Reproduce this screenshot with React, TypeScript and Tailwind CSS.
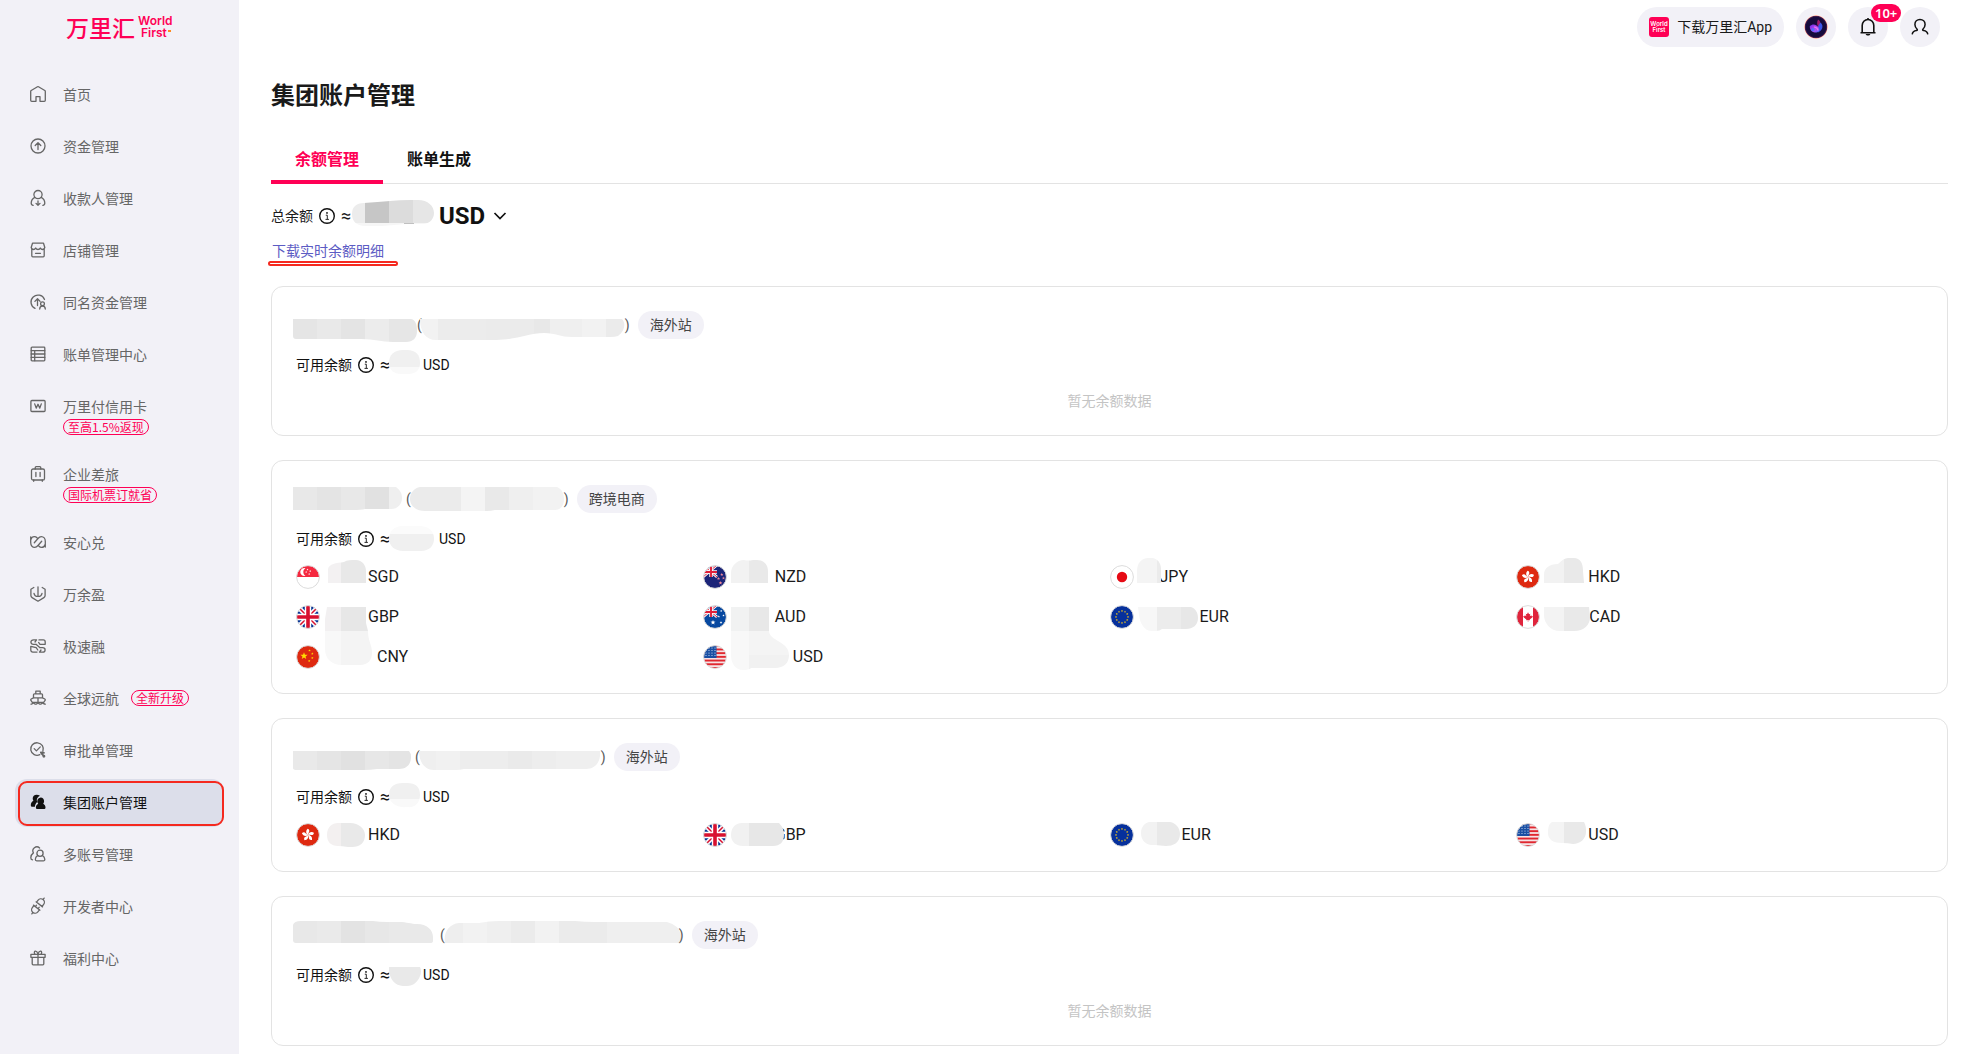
import React, { useId } from "react";

type Band = [x: number, y: number, w: number, h: number, fill: string];
type MaskSpec = { w: number; shape: string; bands: Band[] };

/* Frosted mosaic that hides a private value */
function Mask({ spec, height }: { spec: MaskSpec; height: number }) {
  const id = useId();
  return (
    <svg width={spec.w} height={height} className="shrink-0 overflow-visible" aria-hidden="true">
      <clipPath id={id}>
        <path d={spec.shape} />
      </clipPath>
      <g clipPath={`url(#${id})`} shapeRendering="crispEdges">
        {spec.bands.map(([x, y, w, h, fill], i) => (
          <rect key={i} x={x} y={y} width={w} height={h} fill={fill} />
        ))}
      </g>
    </svg>
  );
}

/* ---------- Sidebar icons ---------- */

function Glyph({ children, solid }: { children: React.ReactNode; solid?: boolean }) {
  return (
    <svg
      width="16"
      height="16"
      viewBox="0 0 16 16"
      className="shrink-0 overflow-visible"
      fill={solid ? "currentColor" : "none"}
      stroke={solid ? "none" : "currentColor"}
      strokeWidth="1.3"
      strokeLinejoin="round"
      strokeLinecap="round"
      aria-hidden="true"
    >
      {children}
    </svg>
  );
}

const icons = {
  home: (
    <Glyph>
      <path d="M6 15.3H1.7a1 1 0 0 1-1-1V5.4c0-.4.2-.7.5-.9L7.5.8a1 1 0 0 1 1 0l6.3 3.7c.3.2.5.5.5.9v8.900a1 1 0 0 1-1 1H10v-4.600H6z" />
    </Glyph>
  ),
  fund: (
    <Glyph>
      <circle cx="8" cy="8" r="7" />
      <path d="M8 11.500V5M5.200 7.500 8 4.700l2.800 2.800" />
    </Glyph>
  ),
  payee: (
    <Glyph>
      <circle cx="8" cy="4.600" r="4.100" />
      <path d="M4.700 7.400C2.500 8.600 1.300 10.500 1.200 13c0 1.400.8 2.200 2 2.300M11.300 7.400c2.200 1.200 3.400 3.100 3.500 5.600 0 1.400-.8 2.200-2 2.300M8 11v4.300M6 13.400l2 1.900 2-1.900" />
    </Glyph>
  ),
  shop: (
    <Glyph>
      <path d="M1.800 6.500v7.300c0 .6.400 1 1 1h10.400c.6 0 1-.4 1-1V6.500M2.500 1.200h11l1.300 4.300c-.3 1.300-1.200 2-2.200 2S10.800 7 10.300 6c-.5 1-1.300 1.500-2.300 1.500S6.200 7 5.700 6c-.5 1-1.300 1.500-2.300 1.500s-1.900-.7-2.200-2zM5.500 11.300h5" />
    </Glyph>
  ),
  sameName: (
    <Glyph>
      <path d="M5 14.400A7 7 0 1 1 14.500 5.500M7.500 11.500V5M4.900 7.400l2.600-2.700 2.600 2.700" />
      <circle cx="12.500" cy="9.800" r="1.900" />
      <path d="M9.700 15c.1-1.800 1.100-3 2.800-3s2.700 1.200 2.800 3" />
    </Glyph>
  ),
  bill: (
    <Glyph>
      <rect x="1.200" y="1.200" width="13.600" height="13.600" rx=".8" />
      <path d="M1.200 4.700h13.600M4.700 4.700v10M1.200 8h13.600M1.200 11.400h13.600" />
    </Glyph>
  ),
  card: (
    <Glyph>
      <rect x=".9" y="2.500" width="14.200" height="11" rx="1" />
      <path d="m4.700 5.900 1.500 4.200L8 6.300l1.800 3.800 1.500-4.200" />
    </Glyph>
  ),
  luggage: (
    <Glyph>
      <rect x="1.500" y="3" width="13" height="11" rx="1.600" />
      <path d="M5.200 3V1.700c0-.6.400-1 1-1h3.600c.6 0 1 .4 1 1V3M5.900 6.300v4.300M10.100 6.300v4.300M3.700 14v1.300M12.300 14v1.300" />
    </Glyph>
  ),
  loop: (
    <Glyph>
      <path d="M.7 3v5.600c0 2.800 1.600 4.800 4 4.800 1.500 0 2.400-.8 3.300-1.900l3.700-4.200M15.300 13V7.400c0-2.800-1.600-4.800-4-4.800-1.500 0-2.400.8-3.300 1.900L4.300 8.700M.9 5.500c.5-1.800 1.800-2.900 3.400-2.900 1.200 0 2 .4 2.700 1.200M15.100 10.500c-.5 1.800-1.800 2.900-3.400 2.900-1.200 0-2-.4-2.700-1.200" />
    </Glyph>
  ),
  yield: (
    <Glyph>
      <path d="M3.800 1.500.9 3.200v6.400c0 .9.500 1.600 1.200 2L8 15.200l5.900-3.600c.7-.4 1.200-1.100 1.200-2V3.200l-2.900-1.700M8 .8v9.400M4 7.300c.3 1.900 1.700 3.100 4 3.100s3.700-1.200 4-3.100" />
    </Glyph>
  ),
  finance: (
    <Glyph>
      <path d="M6.500 1.900H3.600C1.900 1.900.9 2.700.9 4.100s1 2.200 2.500 2.200H6M6.500 1.900 5 4M9.500 14.100h2.900c1.700 0 2.700-.8 2.700-2.200s-1-2.200-2.500-2.200H10M9.500 14.100 11 12M9 1.900h4.300c1.200 0 1.900.9 1.900 2.100v2.300H10L8.600 4.400M7 14.100H2.800c-1.200 0-2-.9-2-2.100V8.300l5.400 1.400 1.600 2.300M6 6.300l4 3.400" />
    </Glyph>
  ),
  ship: (
    <Glyph>
      <path d="M5.800 3.800V1.200h4.400v2.600M3.500 7.800V4.700c0-.5.400-.9.900-.9h7.200c.5 0 .9.400.9.900v3.100M1.200 9l2.300-1.200h9L14.800 9c.5.300.6.900.3 1.300l-1.400 2H2.300l-1.400-2C.6 9.900.7 9.300 1.200 9zM8 7.800v4M1 14.200c1.200 0 1.200-1 2.400-1s1.200 1 2.300 1 1.200-1 2.300-1 1.200 1 2.300 1 1.200-1 2.300-1 1.200 1 2.700 1" />
    </Glyph>
  ),
  approve: (
    <Glyph>
      <path d="M9.800 12.700A6.300 6.300 0 1 1 12.900 9.300" />
      <path d="m4.200 6.600 2.200 2.300 3.900-4" />
      <path d="m11.300 11.300 2.700 2.900M10.800 10.400l3.200.5" strokeWidth="1.700" />
      <circle cx="13.900" cy="14.200" r=".8" />
    </Glyph>
  ),
  group: (
    <Glyph solid>
      <path d="M6.600.7C4.300.7 2.700 2.400 2.700 4.500c0 .9.300 1.700.7 2.300C1.800 7.700.8 9.300.8 11.200c0 .9.500 1.500 1.300 1.500h2.800c.1-2 .8-3.500 2.300-4.800-.8-1.900-.4-4 1.500-5.400L10 1.800C9.100 1.100 7.900.7 6.600.7z" />
      <path d="M10.700 3.400a3.800 3.800 0 0 0-2.500 6.300c-1.500.9-2.300 2.100-2.300 3.700 0 1 .6 1.700 1.600 1.700h6.400c1 0 1.600-.7 1.600-1.700 0-1.600-.9-2.800-2.300-3.700.6-.7.900-1.500.9-2.500 0-2.100-1.500-3.800-3.400-3.800z" />
    </Glyph>
  ),
  multi: (
    <Glyph>
      <path d="M9.600 2A4 4 0 0 0 3.400 6.900C1.600 8.200.8 9.800.8 11.800c0 1.100.6 1.900 1.700 2" />
      <circle cx="10" cy="7.300" r="3.100" />
      <path d="M7.700 9.500c-1.500.9-2.300 2.100-2.400 3.800 0 .9.500 1.500 1.400 1.500h6.700c.9 0 1.500-.6 1.400-1.500-.1-1.700-.9-2.900-2.400-3.800" />
    </Glyph>
  ),
  plug: (
    <Glyph>
      <g transform="rotate(38 8 8)">
        <path d="M3.900 5.900h8.200M4.500 5.900V3.300a3.500 3.500 0 0 1 7 0v2.600M8-.2v-1.800" />
        <path d="M3.900 10.100h8.200M4.500 10.100v2.600a3.500 3.500 0 0 0 7 0v-2.600M8 16.200V18M6.300 8.300v1.800M9.700 8.300v1.800" />
      </g>
    </Glyph>
  ),
  gift: (
    <Glyph>
      <path d="M2.200 7.300v6.500c0 .6.400 1 1 1h9.600c.6 0 1-.4 1-1V7.300M.9 4.300h14.200v3H.9zM8 4.300v10.500M8 4C7.300 2 6.300 1 5.200 1.200 4 1.500 4.200 3.200 4.900 4M8 4c.7-2 1.700-3 2.800-2.800 1.200.3 1 2 .3 2.800" />
    </Glyph>
  ),
};

type NavItem = { icon: React.ReactNode; label: string; below?: string; beside?: string; active?: boolean };

const nav: NavItem[] = [
  { icon: icons.home, label: "首页" },
  { icon: icons.fund, label: "资金管理" },
  { icon: icons.payee, label: "收款人管理" },
  { icon: icons.shop, label: "店铺管理" },
  { icon: icons.sameName, label: "同名资金管理" },
  { icon: icons.bill, label: "账单管理中心" },
  { icon: icons.card, label: "万里付信用卡", below: "至高1.5%返现" },
  { icon: icons.luggage, label: "企业差旅", below: "国际机票订就省" },
  { icon: icons.loop, label: "安心兑" },
  { icon: icons.yield, label: "万余盈" },
  { icon: icons.finance, label: "极速融" },
  { icon: icons.ship, label: "全球远航", beside: "全新升级" },
  { icon: icons.approve, label: "审批单管理" },
  { icon: icons.group, label: "集团账户管理", active: true },
  { icon: icons.multi, label: "多账号管理" },
  { icon: icons.plug, label: "开发者中心" },
  { icon: icons.gift, label: "福利中心" },
];

function Pill({ children }: { children: React.ReactNode }) {
  return (
    <span className="flex h-4 w-fit items-center rounded-full border border-[#ff0055] px-1 text-xs leading-none text-[#ff0055]">
      {children}
    </span>
  );
}

function Sidebar() {
  return (
    <aside className="w-[239px] shrink-0 bg-[#f2f1f7] font-['Noto_Sans_CJK_SC',sans-serif]">
      <a href="#" aria-label="万里汇 WorldFirst" className="flex h-[55px] gap-[3px] pt-[11px] pl-[66px] text-[#ff0055]">
        <span className="text-[23px] leading-8 font-medium">万里汇</span>
        <span className="relative flex flex-col pt-1 font-[Inter,'Noto_Sans',sans-serif] text-xs leading-[12px] font-semibold">
          <span>World</span>
          <span className="pl-[3px]">First</span>
          <span className="absolute top-[19px] right-[2px] h-[2px] w-[3px] bg-[#ff8a1f]" />
        </span>
      </a>
      <nav className="flex flex-col gap-1 pt-4 pr-[15px] pl-[15px]">
        {nav.map((item) => (
          <a
            key={item.label}
            href="#"
            aria-current={item.active ? "page" : undefined}
            className={
              item.active
                ? "relative flex gap-[17px] rounded-xl bg-[#dcdeea] px-[15px] pt-3 pb-[14px] text-sm text-[#111]"
                : "flex gap-[17px] px-[15px] pt-3 pb-[14px] text-sm text-[#666]"
            }
          >
            <span className="flex h-[22px] items-center">{item.icon}</span>
            <span className="flex flex-col">
              <span className="flex items-center gap-3 leading-[22px]">
                {item.label}
                {item.beside && <Pill>{item.beside}</Pill>}
              </span>
              {item.below && (
                <span className="-mb-[2px] pt-[2px]">
                  <Pill>{item.below}</Pill>
                </span>
              )}
            </span>
            {item.active && (
              <span className="absolute top-[2px] right-0 bottom-px left-[3px] rounded-[9px] border-2 border-[#f5291f]" />
            )}
          </a>
        ))}
      </nav>
    </aside>
  );
}

/* ---------- Top bar ---------- */

function TopBar() {
  return (
    <header className="flex h-[55px] justify-end gap-3 pt-[7px] pr-[33px]">
      <button className="flex h-10 items-center gap-2 rounded-full bg-[#f2f1f7] px-3 text-sm text-[#1a1a1a]">
        <svg width="20" height="20" viewBox="0 0 20 20" aria-hidden="true">
          <rect width="20" height="20" rx="3" fill="#ff0055" />
          <text x="10" y="9" fontSize="6" fontWeight="600" fill="#fff" textAnchor="middle" fontFamily="Inter, sans-serif">
            World
          </text>
          <text x="10" y="15" fontSize="6" fontWeight="600" fill="#fff" textAnchor="middle" fontFamily="Inter, sans-serif">
            First
          </text>
        </svg>
        <span>下载万里汇App</span>
      </button>
      <button aria-label="智能助手" className="flex size-10 items-center justify-center rounded-full bg-[#f2f1f7]">
        <svg width="24" height="24" viewBox="0 0 24 24" aria-hidden="true">
          <defs>
            <radialGradient id="orb-edge">
              <stop offset=".82" stopColor="#150a3c" />
              <stop offset=".9" stopColor="#4a2050" />
              <stop offset=".96" stopColor="#ffb9a8" />
              <stop offset="1" stopColor="#ffd9d0" stopOpacity=".3" />
            </radialGradient>
            <linearGradient id="orb-a" x1="0" y1="0" x2="1" y2="1">
              <stop offset="0" stopColor="#6a2be8" />
              <stop offset=".6" stopColor="#c04af0" />
              <stop offset="1" stopColor="#3a6cff" />
            </linearGradient>
          </defs>
          <circle cx="12" cy="12" r="12" fill="url(#orb-edge)" />
          <path d="M14 4.500c3 1.500 3 5 .5 7.500-1.500-2-2-4.500-.5-7.500z" fill="#a01a6b" />
          <path d="M16.500 7.500c3.500 3 2 8-2.500 10-.5-3-.5-7 2.500-10z" fill="#3c55e8" />
          <path d="M5.800 11c3.200-3 7-1.500 9 2 1.500 3-1 5-4 4.500S5.500 14.500 5.800 11z" fill="url(#orb-a)" />
          <path d="M10 12c1.500 0 3.500 1.500 4.200 3.500" stroke="#f07af5" strokeWidth="1.200" fill="none" />
          <circle cx="9" cy="14.800" r="1.700" fill="#3e7bff" opacity=".8" />
        </svg>
      </button>
      <button aria-label="通知" className="relative flex size-10 items-center justify-center rounded-full bg-[#f2f1f7]">
        <svg width="18" height="20" viewBox="0 0 18 20" fill="none" stroke="#111" strokeWidth="1.600" aria-hidden="true">
          <path d="M1.500 15.700h15M3.200 15.500V8.600C3.200 5.300 5.700 2.500 9 2.500s5.800 2.800 5.800 6.100v6.900M9 2.500V1" />
          <path d="M6.600 17c.4 1 1.300 1.600 2.400 1.600s2-.6 2.400-1.600z" fill="#111" stroke="none" />
        </svg>
        <span className="absolute -top-[3px] left-[23px] flex h-[18px] items-center rounded-full bg-[#ff0055] px-1 font-['Noto_Sans',sans-serif] text-[13px] leading-none font-semibold text-white">
          10+
        </span>
      </button>
      <button aria-label="账户" className="flex size-10 items-center justify-center rounded-full bg-[#f2f1f7]">
        <svg width="18" height="18" viewBox="0 0 18 18" fill="none" stroke="#111" strokeWidth="1.500" aria-hidden="true">
          <path d="M1.200 16.300c.3-2.300 2-3.400 4.300-3.700.9-.1 1.100-.8.600-1.400C4.700 9.800 3.900 8.300 3.900 6.500c0-3 2.200-5 5.100-5s5.100 2 5.100 5c0 1.800-.8 3.300-2.200 4.700-.5.600-.3 1.300.6 1.400 2.300.3 4 1.400 4.300 3.700" />
        </svg>
      </button>
    </header>
  );
}

/* ---------- Flags ---------- */

const UnionJack = () => (
  <>
    <path fill="#0a3796" d="M0 0h24v24H0z" />
    <path d="M0 0l24 24M24 0L0 24" stroke="#fff" strokeWidth="4.600" />
    <path d="M0 0l24 24M24 0L0 24" stroke="#d8102f" strokeWidth="1.500" />
    <path d="M12 0v24M0 12h24" stroke="#fff" strokeWidth="6.400" />
    <path d="M12 0v24M0 12h24" stroke="#d8102f" strokeWidth="3.600" />
  </>
);

function Star({ x, y, r, fill }: { x: number; y: number; r: number; fill: string }) {
  const pts = Array.from({ length: 10 }, (_, i) => {
    const a = (Math.PI / 5) * i - Math.PI / 2;
    const q = i % 2 ? r * 0.42 : r;
    return `${x + q * Math.cos(a)},${y + q * Math.sin(a)}`;
  }).join(" ");
  return <polygon points={pts} fill={fill} />;
}

const canton = (
  <g>
    <path d="M0 0l14 12M14 0L0 12" stroke="#fff" strokeWidth="2.600" />
    <path d="M0 0l14 12M14 0L0 12" stroke="#e0203a" strokeWidth="1" />
    <path d="M8 0v12M0 7h14" stroke="#fff" strokeWidth="3.400" />
    <path d="M8 0v12M0 7h14" stroke="#e0203a" strokeWidth="1.900" />
  </g>
);

const flagArt: Record<string, React.ReactNode> = {
  SGD: (
    <>
      <path fill="#fff" d="M0 0h24v24H0z" />
      <path fill="#f5283f" d="M0 0h24v12H0z" />
      <path d="M9.500 3.200a4 4 0 1 0 0 7.600 4.400 4.400 0 0 1 0-7.600z" fill="#fff" />
      <Star x={11.5} y={4.6} r={1.1} fill="#fff" />
      <Star x={14.2} y={6.2} r={1.1} fill="#fff" />
      <Star x={10.2} y={7} r={1.1} fill="#fff" />
      <Star x={13.2} y={9} r={1.1} fill="#fff" />
    </>
  ),
  NZD: (
    <>
      <path fill="#1b2478" d="M0 0h24v24H0z" />
      {canton}
      <Star x={18.8} y={9.5} r={1.7} fill="#f08a9a" />
      <Star x={15.5} y={13.5} r={1.7} fill="#f08a9a" />
      <Star x={20.5} y={13.2} r={1.6} fill="#f08a9a" />
      <Star x={17.5} y={18} r={2} fill="#f08a9a" />
    </>
  ),
  AUD: (
    <>
      <path fill="#0748a0" d="M0 0h24v24H0z" />
      {canton}
      <Star x={10} y={17.5} r={2.6} fill="#fff" />
      <Star x={18.2} y={6} r={1.2} fill="#fff" />
      <Star x={15.8} y={11.5} r={1.2} fill="#fff" />
      <Star x={20.5} y={10.5} r={1.2} fill="#fff" />
      <Star x={18} y={17.5} r={1.4} fill="#fff" />
    </>
  ),
  GBP: <UnionJack />,
  JPY: (
    <>
      <path fill="#fff" d="M0 0h24v24H0z" />
      <circle cx="12" cy="12" r="5.200" fill="#e60a14" />
    </>
  ),
  EUR: (
    <>
      <path fill="#06309c" d="M0 0h24v24H0z" />
      {Array.from({ length: 12 }, (_, i) => (
        <Star
          key={i}
          x={12 + 6 * Math.cos((i * Math.PI) / 6)}
          y={12 + 6 * Math.sin((i * Math.PI) / 6)}
          r={1.2}
          fill="#f6c715"
        />
      ))}
    </>
  ),
  HKD: (
    <>
      <path fill="#de2910" d="M0 0h24v24H0z" />
      {[0, 72, 144, 216, 288].map((a) => (
        <path
          key={a}
          transform={`rotate(${a} 12 12)`}
          d="M12 12c-2.200-1.300-2.500-4.600-.3-6.300 1.500.6 2.200 2.100 1.200 3.500-.6 1-.7 1.800-.9 2.800z"
          fill="#fff"
        />
      ))}
    </>
  ),
  CAD: (
    <>
      <path fill="#fff" d="M0 0h24v24H0z" />
      <path fill="#e0243c" d="M0 0h7v24H0zM17 0h7v24h-7z" />
      <path
        fill="#e0243c"
        d="M12 7.300l-1 1.900-1.200-.5.500 2.600-1.500-1-.3.900-1.300-.1.600 1.400 2.600 1.900-.3.900 1.700-.2v1.600h.5v-1.600l1.700.2-.3-.9 2.600-1.900.6-1.400-1.300.1-.3-.9-1.500 1 .5-2.600-1.200.5z"
      />
    </>
  ),
  CNY: (
    <>
      <path fill="#de2910" d="M0 0h24v24H0z" />
      <Star x={8} y={11} r={3.8} fill="#ffde00" />
      <Star x={13.5} y={5.5} r={1.3} fill="#ffde00" />
      <Star x={16.3} y={8.6} r={1.3} fill="#ffde00" />
      <Star x={16.3} y={13} r={1.3} fill="#ffde00" />
      <Star x={13.2} y={16} r={1.3} fill="#ffde00" />
    </>
  ),
  USD: (
    <>
      <path fill="#f6e2e4" d="M0 0h24v24H0z" />
      {[0, 1, 2, 3, 4, 5, 6].map((i) => (
        <rect key={i} x="0" y={i * 3.7 - 0.2} width="24" height="1.900" fill="#e0272f" />
      ))}
      <path fill="#1a4fa3" d="M0 0h13.500v13H0z" />
      {[3, 6, 9, 12].map((x) => [3, 5.5, 8, 10.5].map((y) => <circle key={`${x}-${y}`} cx={x} cy={y} r=".6" fill="#d5e2f5" />))}
    </>
  ),
};

function Flag({ code }: { code: string }) {
  const id = useId();
  return (
    <svg width="24" height="24" viewBox="0 0 24 24" className="shrink-0" role="img" aria-label={code}>
      <clipPath id={id}>
        <circle cx="12" cy="12" r="11.300" />
      </clipPath>
      <g clipPath={`url(#${id})`}>{flagArt[code]}</g>
      <circle cx="12" cy="12" r="11.400" fill="none" stroke="#dcdcdc" strokeWidth="1" />
    </svg>
  );
}

/* ---------- Account cards ---------- */

type Balance = { code: string; mask: MaskSpec };
type Account = { name: MaskSpec; number: MaskSpec; tag: string; total: MaskSpec; balances: Balance[] };

const accounts: Account[] = [
  {
    name: {
      w: 124,
      shape: "M0 8H118C123 9 124 14 124 20C124 27 120 31 113 31H100C88 31 82 28 68 28H3Q0 28 0 25z",
      bands: [[0, 0, 24, 40, "#e5e5e5"], [24, 0, 24, 40, "#e9e9e9"], [48, 0, 24, 40, "#e4e4e4"], [72, 0, 24, 40, "#ececec"], [96, 0, 28, 40, "#e6e6e6"]],
    },
    number: {
      w: 203,
      shape: "M-2 8H200C204 12 203 20 196 25Q193 26 188 26H150C138 26 134 22 122 22C106 22 94 29 74 29H14C4 29 -2 21 -2 8z",
      bands: [[-2, 0, 18, 40, "#f2f2f2"], [16, 0, 48, 40, "#ececec"], [64, 0, 48, 40, "#ebebeb"], [112, 0, 16, 40, "#e8e8e8"], [128, 0, 32, 40, "#efefef"], [160, 0, 24, 40, "#f2f2f2"], [184, 0, 20, 40, "#ebebeb"]],
    },
    tag: "海外站",
    total: { w: 34, shape: "M0 8C0 0 5 -5 14 -5H18C27 -5 31 0 31 8C31 15 27 19 19 19H12C5 19 0 15 0 8z", bands: [[0, -6, 34, 18, "#f0f0f0"], [0, 12, 34, 10, "#f9f9f9"]] },
    balances: [],
  },
  {
    name: {
      w: 113,
      shape: "M0 2H103C108 6 109 9 109 13C109 19 105 24 98 24H72Q68 25 60 25H0z",
      bands: [[0, 0, 24, 30, "#e8e8e8"], [24, 0, 24, 30, "#e4e4e4"], [48, 0, 24, 30, "#e8e8e8"], [72, 0, 24, 30, "#e1e1e1"], [96, 0, 14, 30, "#efefef"]],
    },
    number: {
      w: 153,
      shape: "M9 2H146C151 4 153 9 153 14C153 20 150 25 144 25H84Q80 26 76 26H14C4 26 -1 20 -1 14C-1 8 3 3 9 2z",
      bands: [[-2, 0, 52, 30, "#ebebeb"], [50, 0, 24, 30, "#f4f4f4"], [74, 0, 24, 30, "#e9e9e9"], [98, 0, 24, 30, "#efefef"], [122, 0, 32, 30, "#f2f2f2"]],
    },
    tag: "跨境电商",
    total: { w: 50, shape: "M0 10C0 2 5 -3 14 -3H30C39 -3 45 1 45 10C45 17 40 22 32 22H14C6 22 0 17 0 10z", bands: [[0, -4, 50, 9, "#fbfbfb"], [0, 5, 50, 20, "#f0f0f0"]] },
    balances: [
      { code: "SGD", mask: { w: 48, shape: "M8 26V12C9 7 16 6 24 5C27 3 31 3 36 3C42 3 46 8 46 14V26z", bands: [[8, 0, 13, 40, "#f3f1f2"], [21, 0, 25, 40, "#e8e8e8"]] } },
      { code: "NZD", mask: { w: 48, shape: "M4 26V16C4 9 10 3 17 3Q21 4 26 3H30C37 3 41 8 41 14V26z", bands: [[4, 0, 18, 40, "#f2f2f2"], [22, 0, 20, 40, "#e9e9e9"]] } },
      { code: "JPY", mask: { w: 26, shape: "M3 26V14C3 6 8 1 14 1H18C23 1 27 6 27 12V26z", bands: [[3, 0, 20, 40, "#f4f4f4"], [23, 0, 4, 40, "#ebebeb"]] } },
      { code: "HKD", mask: { w: 48, shape: "M4 26V18C4 11 9 7 18 7C22 3 25 1 28 1H34C40 1 43 6 43 14L44 26z", bands: [[4, 0, 20, 40, "#f2f2f2"], [24, 0, 21, 40, "#e9e9e9"]] } },
      { code: "GBP", mask: { w: 48, shape: "M7 10H46V26L48 34H5V22z", bands: [[5, 0, 16, 34, "#f2f0f1"], [21, 0, 28, 34, "#e7e7e7"]] } },
      { code: "AUD", mask: { w: 48, shape: "M4 10H42V34H4z", bands: [[4, 0, 18, 40, "#f1f2f2"], [22, 0, 20, 40, "#e8e8e8"]] } },
      { code: "EUR", mask: { w: 66, shape: "M4 10H57C62 12 64 16 64 21C64 28 59 32 52 32H28Q26 34 22 34H18C10 34 6 26 5 18z", bands: [[4, 0, 19, 40, "#f7f7f7"], [23, 0, 24, 40, "#ececec"], [47, 0, 18, 40, "#e7e7e7"]] } },
      { code: "CAD", mask: { w: 49, shape: "M4 10H49L50 20C50 28 44 34 34 34H20C10 34 4 26 4 18z", bands: [[4, 0, 20, 40, "#f3f3f3"], [24, 0, 26, 40, "#e9e9e9"]] } },
      { code: "CNY", mask: { w: 57, shape: "M5 -6H48C48 4 52 8 52 16C52 23 48 28 40 28H22C12 28 5 22 5 12z", bands: [[5, -6, 16, 40, "#f8f8f8"], [21, -6, 32, 40, "#f4f4f4"]] } },
      { code: "USD", mask: { w: 66, shape: "M4 -6H42C42 4 62 4 62 18C62 26 57 31 48 31H24Q22 33 16 33C8 33 4 26 4 18z", bands: [[4, -6, 18, 40, "#f8f8f8"], [22, -6, 42, 24, "#f4f4f4"], [22, 18, 42, 20, "#f1f1f1"]] } },
    ],
  },
  {
    name: {
      w: 122,
      shape: "M0 8H116Q118 10 118 14C118 21 114 26 106 26H84Q78 27 70 27H4Q0 27 0 25z",
      bands: [[0, 0, 24, 30, "#e9e9e9"], [24, 0, 24, 30, "#e5e5e5"], [48, 0, 24, 30, "#e1e1e1"], [72, 0, 24, 30, "#e7e7e7"], [96, 0, 24, 30, "#e4e4e4"]],
    },
    number: {
      w: 181,
      shape: "M-1 8H180C181 18 176 26 166 26H44Q40 27 36 27H14C4 27 -1 18 -1 8z",
      bands: [[-1, 0, 17, 30, "#efefef"], [16, 0, 24, 30, "#f1f1f1"], [40, 0, 48, 30, "#ededed"], [88, 0, 24, 30, "#eaeaea"], [112, 0, 24, 30, "#ededed"], [136, 0, 46, 30, "#efefef"]],
    },
    tag: "海外站",
    total: { w: 34, shape: "M0 8C0 0 5 -4 14 -4H18C27 -4 31 0 31 8C31 16 26 21 18 20C8 21 0 16 0 8z", bands: [[0, -6, 34, 18, "#f0f0f0"], [0, 12, 34, 10, "#f9f9f9"]] },
    balances: [
      { code: "HKD", mask: { w: 48, shape: "M7 20C7 12 12 8 18 8H30C39 8 45 14 45 20C45 28 40 32 32 32H28Q22 31 18 31C11 31 7 27 7 20z", bands: [[7, 0, 14, 40, "#f3f0f0"], [21, 0, 25, 40, "#e9e9e9"]] } },
      { code: "GBP", mask: { w: 48, shape: "M4 20C4 12 9 8 15 8H52C56 12 57 16 57 20C57 27 53 31 46 31H16C9 31 4 27 4 20z", bands: [[4, 0, 18, 40, "#f1f1f1"], [22, 0, 36, 40, "#e7e7e7"]] } },
      { code: "EUR", mask: { w: 48, shape: "M7 18C7 12 11 7 16 7H36C42 8 46 13 46 19C46 28 39 31 32 31C24 30 17 30 17 30C11 29 7 25 7 18z", bands: [[7, 0, 16, 40, "#f2f2f2"], [23, 0, 24, 40, "#e9e9e9"]] } },
      { code: "USD", mask: { w: 48, shape: "M8 18C8 12 9 9 12 7H44C46 10 46 14 46 17C46 24 40 29 33 29Q28 28 22 28C14 28 8 25 8 18z", bands: [[8, 0, 16, 40, "#f4f4f4"], [24, 0, 23, 40, "#e9e9e9"]] } },
    ],
  },
  {
    name: {
      w: 147,
      shape: "M0 4Q1 0 8 0H80Q86 1 94 1H106C114 1 118 3 124 3C134 3 140 9 140 16V20Q140 22 137 22H3Q0 22 0 19z",
      bands: [[0, 0, 24, 30, "#e8e8e8"], [24, 0, 24, 30, "#eaeaea"], [48, 0, 24, 30, "#e3e3e3"], [72, 0, 24, 30, "#e7e7e7"], [96, 0, 46, 30, "#e9e9e9"]],
    },
    number: {
      w: 234,
      shape: "M0 22C-2 12 4 3 14 2H34Q44 0 54 0H130Q140 1 150 1H222Q234 4 236 14V22z",
      bands: [[-2, 0, 20, 30, "#eeeeee"], [18, 0, 24, 30, "#f2f2f2"], [42, 0, 24, 30, "#efefef"], [66, 0, 24, 30, "#ebebeb"], [90, 0, 24, 30, "#f2f2f2"], [114, 0, 48, 30, "#ebebeb"], [162, 0, 75, 30, "#efefef"]],
    },
    tag: "海外站",
    total: { w: 34, shape: "M0 2H31Q33 6 31 11C29 17 24 21 18 21H14C6 21 -1 13 0 2z", bands: [[0, 0, 34, 24, "#e9e9e9"]] },
    balances: [],
  },
];

function Info() {
  return (
    <svg width="16" height="16" viewBox="0 0 16 16" fill="none" stroke="#111" strokeWidth="1.400" className="shrink-0" aria-hidden="true">
      <circle cx="8" cy="8" r="7.300" />
      <path d="M6.800 7.200h1.500v4M6.500 11.400h3.400" strokeWidth=".9" />
      <circle cx="8" cy="4.900" r=".9" fill="#111" stroke="none" />
    </svg>
  );
}

function AccountCard({ account }: { account: Account }) {
  return (
    <section className="rounded-xl border border-[#e3e3e3] pt-6">
      <h2 className="flex h-7 items-center pl-[21px] text-sm text-[#595959]">
        <Mask spec={account.name} height={28} />
        <span>(</span>
        <Mask spec={account.number} height={28} />
        <span>)</span>
        <span className="ml-2 flex h-7 items-center rounded-full bg-[#f2f1f7] px-3 text-[#444]">{account.tag}</span>
      </h2>
      <div className="mt-4 flex h-5 items-center px-6 text-sm text-[#111]">
        <span className="mr-[6px]">可用余额</span>
        <Info />
        <span className="ml-[6px] w-[9px] text-lg leading-5">≈</span>
        <Mask spec={account.total} height={20} />
        <span>USD</span>
      </div>
      {account.balances.length ? (
        <ul className="mt-2 grid grid-cols-4 px-6 pb-4">
          {account.balances.map((b) => (
            <li key={b.code} className="flex h-10 items-center text-base text-[#1a1a1a]">
              <Flag code={b.code} />
              <Mask spec={b.mask} height={40} />
              <span className="relative -z-10">{b.code}</span>
            </li>
          ))}
        </ul>
      ) : (
        <p className="mt-4 pb-6 text-center text-sm text-[#c4c4c4]">暂无余额数据</p>
      )}
    </section>
  );
}

const totalMask: MaskSpec = {
  w: 87,
  shape: "M0 14C0 7 4 3 12 3Q26 2 38 1Q48 0 58 0H66C76 0 82 6 82 13C82 19 78 23 72 24H54L30 26H14C5 26 0 22 0 14z",
  bands: [
    [0, 23, 82, 4, "#f6f6f6"],
    [0, 0, 13, 23, "#ececec"],
    [13, 0, 24, 23, "#c6c6c6"],
    [37, 0, 24, 23, "#dcdcdc"],
    [61, 0, 22, 23, "#e6e6e6"],
    [52, 23, 10, 1, "#c0c0c0"],
  ],
};

export default function App() {
  return (
    <div className="flex min-h-screen bg-white font-[Roboto,'Noto_Sans_CJK_SC',sans-serif]">
      <Sidebar />
      <div className="flex min-w-0 flex-1 flex-col">
        <TopBar />
        <main className="relative z-0 pt-[25px] pr-[25px] pb-2 pl-8">
          <h1 className="text-2xl leading-8 font-bold text-[#1a1a1a]">集团账户管理</h1>
          <div role="tablist" className="mt-6 flex h-12 border-b border-[#e3e3e3] text-base text-[#111]">
            <button role="tab" aria-selected="true" className="h-12 border-b-4 border-[#ff0055] px-6 pt-1 font-bold text-[#ff0055]">
              余额管理
            </button>
            <button role="tab" aria-selected="false" className="h-11 px-6 pt-1 font-bold">
              账单生成
            </button>
          </div>
          <div className="mt-4 flex h-8 items-center text-sm text-[#1a1a1a]">
            <span className="mr-[6px]">总余额</span>
            <Info />
            <span className="ml-[6px] w-[11px] text-lg leading-5">≈</span>
            <Mask spec={totalMask} height={32} />
            <button className="flex items-center gap-2 text-2xl leading-8 font-bold text-[#111]">
              USD
              <svg width="14" height="8" viewBox="0 0 14 8" fill="none" stroke="#111" strokeWidth="1.700" aria-hidden="true">
                <path d="m1.500 1 5.500 5.500L12.500 1" />
              </svg>
            </button>
          </div>
          <div className="mt-2 flex">
            <a href="#" className="relative pl-px text-sm leading-[22px] text-[#5c5cc4]">
              下载实时余额明细
              <span className="absolute top-[21px] -right-[14px] -left-[3px] h-[5px] rounded-full border-2 border-[#f5291f] bg-white" />
            </a>
          </div>
          <div className="mt-6 flex flex-col gap-6">
            {accounts.map((account, i) => (
              <AccountCard key={i} account={account} />
            ))}
          </div>
        </main>
      </div>
    </div>
  );
}
